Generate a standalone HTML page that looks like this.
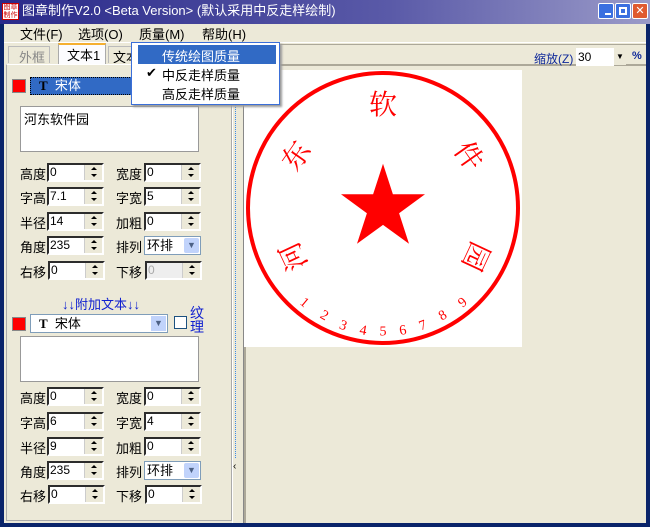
<!DOCTYPE html>
<html><head><meta charset="utf-8"><style>
*{margin:0;padding:0;box-sizing:border-box}
body{width:650px;height:527px;overflow:hidden;background:#0a246a;font-family:"Liberation Sans","Noto Sans CJK SC",sans-serif;font-size:12px;position:relative}
.a{position:absolute;white-space:nowrap}
#title{left:0;top:0;width:650px;height:24px;background:linear-gradient(to right,#2a2a8a,#5a5aa8 60%,#9a9ac8);color:#fff;font-size:13px;line-height:22px;padding-left:22px}
#client{left:4px;top:24px;width:642px;height:499px;background:#ece9d8}
.lbl{position:absolute;font-size:13px;color:#000}
.sp{position:absolute;width:57px;height:19px;background:#fff;border:2px inset #a0a0a0;border-color:#808080 #fff #fff #808080;font-size:12px;line-height:15px;padding-left:1px}
.sp i{position:absolute;right:0;top:0;width:18px;height:15px;background:#ece9d8;border-left:1px solid #ccc}
.sp i:before{content:"";position:absolute;left:6px;top:2px;border:3px solid transparent;border-bottom:3px solid #000;border-top:0}
.sp i:after{content:"";position:absolute;left:6px;top:9px;border:3px solid transparent;border-top:3px solid #000;border-bottom:0}
.cb{position:absolute;width:57px;height:19px;background:#fff;border:1px solid #7f9db9;font-size:13px;line-height:17px;padding-left:2px}
.cb i{position:absolute;right:1px;top:1px;width:15px;height:15px;background:#c1d3fb;border-radius:2px;color:#4d6185;font-size:9px;line-height:15px;text-align:center;font-style:normal}
.ta{position:absolute;background:#fff;border:1px solid #999;font-size:13px;padding:2px 3px}
.red{position:absolute;width:14px;height:14px;background:#f00;border:1px solid #888}
.mn{position:absolute;font-size:13px;top:0px}
</style></head><body>
<div class="a" id="title">图章制作V2.0 &lt;Beta Version&gt; (默认采用中反走样绘制)</div>
<div class="a" style="left:2px;top:3px;width:17px;height:17px;background:#fff;border:1px solid #c00;color:#c00;font-size:7px;line-height:8px;text-align:center">图章<br>制作</div>
<div class="a" style="left:598px;top:3px;width:16px;height:16px;background:#3b6fe0;border:1px solid #fff;border-radius:2px"></div>
<div class="a" style="left:615px;top:3px;width:16px;height:16px;background:#3b6fe0;border:1px solid #fff;border-radius:2px"></div>
<div class="a" style="left:632px;top:3px;width:16px;height:16px;background:#e05a30;border:1px solid #fff;border-radius:2px;color:#fff;font-size:11px;line-height:14px;text-align:center">✕</div>
<div class="a" style="left:605px;top:13px;width:6px;height:2px;background:#fff"></div>
<div class="a" style="left:619px;top:7px;width:8px;height:8px;border:2px solid #fff"></div>
<div class="a" id="client">
 <div class="mn" style="left:16px">文件(F)</div>
 <div class="mn" style="left:74px">选项(O)</div>
 <div class="mn" style="left:135px">质量(M)</div>
 <div class="mn" style="left:198px">帮助(H)</div>
 <div class="a" style="left:0;top:18px;width:642px;height:1px;background:#fff"></div>
 <div class="a" style="left:4px;top:22px;width:42px;height:17px;border:1px solid #bbb;border-bottom:0;font-size:13px;color:#888;padding-left:10px">外框</div>
 <div class="a" style="left:54px;top:19px;width:48px;height:21px;background:#fcfcfe;border:1px solid #aaa;border-top:2px solid #f5b030;border-bottom:0;font-size:13px;padding-left:8px">文本1</div>
 <div class="a" style="left:104px;top:22px;width:26px;height:17px;border:1px solid #bbb;border-bottom:0;font-size:13px;padding-left:4px;overflow:hidden">文本</div>
 <div class="a" style="left:2px;top:40px;width:226px;height:457px;border:1px solid #aaa;border-top-color:#fff"></div>
 <div class="a" style="left:228px;top:38px;width:12px;height:461px;border-left:1px solid #fff;border-right:1px solid #888"></div>
 <div class="a" style="left:231px;top:44px;width:0;height:390px;border-left:1px dotted #3a8ae8"></div>
 <div class="a" style="left:229px;top:435px;width:9px;height:16px;background:#ece9d8;font-size:10px;line-height:16px">‹</div>
 <div class="a" style="left:240px;top:20px;width:402px;height:1px;background:#aca899"></div>
 <div class="a" style="left:240px;top:40px;width:402px;height:2px;background:#aca899"></div>
 <div class="a" style="left:530px;top:26px;font-size:12px;color:#102a9a">缩放(Z)</div>
 <div class="a" style="left:572px;top:24px;width:38px;height:18px;background:#fff;font-size:12px;padding:2px">30</div>
 <div class="a" style="left:610px;top:25px;width:12px;height:16px;background:#ece9d8;font-size:8px;text-align:center;line-height:16px">▼</div>
 <div class="a" style="left:628px;top:26px;font-size:11px;color:#102a9a;font-weight:bold">%</div>
 <div class="a" style="left:240px;top:42px;width:2px;height:457px;background:#aca899"></div>
 <svg class="a" style="left:240px;top:46px" width="278" height="277">
  <rect width="278" height="277" fill="#fff"/>
  <circle cx="139" cy="138" r="135" fill="none" stroke="#f00" stroke-width="4"/>
  <polygon fill="#f00" points="139,93.8 148.9,124.3 181,124.3 155.1,143.2 165,173.8 139,154.9 113,173.8 122.9,143.2 97,124.3 129.1,124.3"/>
  <g fill="#f00" font-family="Noto Serif CJK SC,serif" font-size="28" text-anchor="middle" dominant-baseline="central">
   <text x="139" y="33">软</text>
   <text transform="translate(51,85) rotate(-55)">东</text>
   <text transform="translate(226,85) rotate(55)">件</text>
   <text transform="translate(48,187) rotate(-115)">河</text>
   <text transform="translate(233,187) rotate(115)">园</text>
  </g>
  <g fill="#f00" font-family="Liberation Serif,serif" font-size="14" text-anchor="middle" dominant-baseline="central">
   <text transform="translate(60,233) rotate(40)">1</text>
   <text transform="translate(80,246) rotate(30)">2</text>
   <text transform="translate(99,256) rotate(20)">3</text>
   <text transform="translate(119,261) rotate(10)">4</text>
   <text transform="translate(139,262)">5</text>
   <text transform="translate(159,261) rotate(-10)">6</text>
   <text transform="translate(179,256) rotate(-20)">7</text>
   <text transform="translate(199,246) rotate(-30)">8</text>
   <text transform="translate(219,233) rotate(-40)">9</text>
  </g>
 </svg>
 <div class="red" style="left:8px;top:55px"></div>
 <div class="a" style="left:26px;top:53px;width:140px;height:18px;background:#316ac5;border:1px dotted #000;color:#fff;font-size:13px;line-height:16px;padding-left:8px"><b style="font-family:'Liberation Serif';color:#000">T</b>&nbsp; 宋体</div>
 <div class="ta" style="left:16px;top:82px;width:179px;height:46px">河东软件园</div>
 <div class="lbl" style="left:16px;top:140px">高度</div><div class="sp" style="left:43px;top:139px">0<i></i></div>
 <div class="lbl" style="left:112px;top:140px">宽度</div><div class="sp" style="left:140px;top:139px">0<i></i></div>
 <div class="lbl" style="left:16px;top:164px">字高</div><div class="sp" style="left:43px;top:163px">7.1<i></i></div>
 <div class="lbl" style="left:112px;top:164px">字宽</div><div class="sp" style="left:140px;top:163px">5<i></i></div>
 <div class="lbl" style="left:16px;top:189px">半径</div><div class="sp" style="left:43px;top:188px">14<i></i></div>
 <div class="lbl" style="left:112px;top:189px">加粗</div><div class="sp" style="left:140px;top:188px">0<i></i></div>
 <div class="lbl" style="left:16px;top:213px">角度</div><div class="sp" style="left:43px;top:212px">235<i></i></div>
 <div class="lbl" style="left:112px;top:213px">排列</div><div class="cb" style="left:140px;top:212px">环排<i>▼</i></div>
 <div class="lbl" style="left:16px;top:238px">右移</div><div class="sp" style="left:44px;top:237px">0<i></i></div>
 <div class="lbl" style="left:112px;top:238px">下移</div><div class="sp" style="left:141px;top:237px;background:#eee;color:#aaa">0<i></i></div>
 <div class="a" style="left:58px;top:270px;font-size:13px;color:#1020d0">↓↓附加文本↓↓</div>
 <div class="red" style="left:8px;top:293px"></div>
 <div class="a" style="left:26px;top:290px;width:138px;height:19px;background:#fff;border:1px solid #7f9db9;font-size:13px;line-height:17px;padding-left:8px"><b style="font-family:'Liberation Serif'">T</b>&nbsp; 宋体<span style="position:absolute;right:1px;top:1px;width:15px;height:15px;background:#c1d3fb;font-size:9px;line-height:15px;text-align:center;color:#4d6185">▼</span></div>
 <div class="a" style="left:170px;top:292px;width:13px;height:13px;background:#fff;border:1px solid #1c5180"></div>
 <div class="a" style="left:186px;top:282px;width:14px;font-size:14px;line-height:14px;color:#1020d0;white-space:normal">纹理</div>
 <div class="ta" style="left:16px;top:312px;width:179px;height:46px"></div>
 <div class="lbl" style="left:16px;top:364px">高度</div><div class="sp" style="left:43px;top:363px">0<i></i></div>
 <div class="lbl" style="left:112px;top:364px">宽度</div><div class="sp" style="left:140px;top:363px">0<i></i></div>
 <div class="lbl" style="left:16px;top:389px">字高</div><div class="sp" style="left:43px;top:388px">6<i></i></div>
 <div class="lbl" style="left:112px;top:389px">字宽</div><div class="sp" style="left:140px;top:388px">4<i></i></div>
 <div class="lbl" style="left:16px;top:414px">半径</div><div class="sp" style="left:43px;top:413px">9<i></i></div>
 <div class="lbl" style="left:112px;top:414px">加粗</div><div class="sp" style="left:140px;top:413px">0<i></i></div>
 <div class="lbl" style="left:16px;top:438px">角度</div><div class="sp" style="left:43px;top:437px">235<i></i></div>
 <div class="lbl" style="left:112px;top:438px">排列</div><div class="cb" style="left:140px;top:437px">环排<i>▼</i></div>
 <div class="lbl" style="left:16px;top:462px">右移</div><div class="sp" style="left:44px;top:461px">0<i></i></div>
 <div class="lbl" style="left:112px;top:462px">下移</div><div class="sp" style="left:141px;top:461px">0<i></i></div>
</div>
<div class="a" style="left:131px;top:42px;width:149px;height:63px;background:#fff;border:1px solid #3b6fd8;box-shadow:2px 2px 2px #999">
 <div class="a" style="left:6px;top:2px;width:138px;height:19px;background:#316ac5"></div>
 <div class="a" style="left:30px;top:3px;font-size:13px;color:#fff">传统绘图质量</div>
 <div class="a" style="left:14px;top:22px;font-size:13px">✔</div>
 <div class="a" style="left:30px;top:22px;font-size:13px">中反走样质量</div>
 <div class="a" style="left:30px;top:41px;font-size:13px">高反走样质量</div>
</div>
</body></html>
